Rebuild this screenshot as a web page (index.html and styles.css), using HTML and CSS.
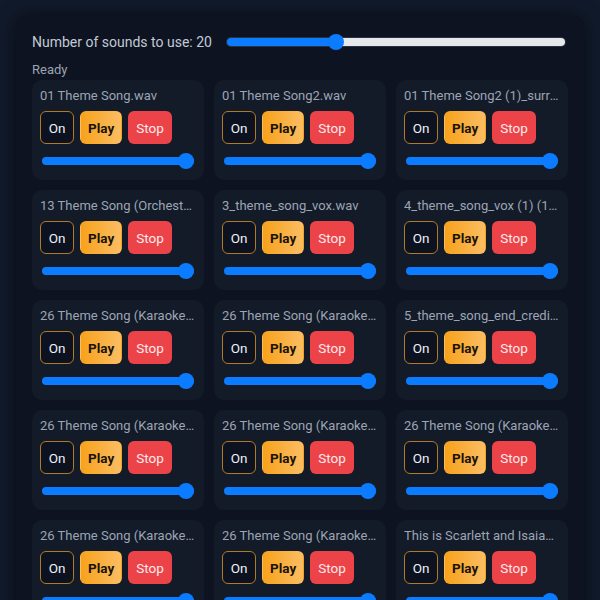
FILE: index.html
```html
<!DOCTYPE html>
<html lang="en">
<head>
<meta charset="UTF-8" />
<title>Sound Board</title>
<meta name="viewport" content="width=device-width, initial-scale=1.0" />
<link rel="stylesheet" href="styles.css">
</head>
<body>
    <main class="panel">
        <div class="controls">
            <label for="range-count">Number of sounds to use: <span id="output-count">20</span></label>
            <input type="range" id="range-count" class="range range-count" value="20" min="0" max="64" step="1" style="--fill:31.25%" />
        </div>

        <div class="status">Ready</div>

        <div class="sounds">
            <div class="sound">
                <div class="sound-name">01 Theme Song.wav</div>
                <div class="sound-buttons"><button class="btn btn-on">On</button><button class="btn btn-play">Play</button><button class="btn btn-stop">Stop</button></div>
                <input type="range" class="range range-volume" value="1" min="0" max="1" step="0.01" />
            </div>
            <div class="sound">
                <div class="sound-name">01 Theme Song2.wav</div>
                <div class="sound-buttons"><button class="btn btn-on">On</button><button class="btn btn-play">Play</button><button class="btn btn-stop">Stop</button></div>
                <input type="range" class="range range-volume" value="1" min="0" max="1" step="0.01" />
            </div>
            <div class="sound">
                <div class="sound-name">01 Theme Song2 (1)_surround.wav</div>
                <div class="sound-buttons"><button class="btn btn-on">On</button><button class="btn btn-play">Play</button><button class="btn btn-stop">Stop</button></div>
                <input type="range" class="range range-volume" value="1" min="0" max="1" step="0.01" />
            </div>

            <div class="sound">
                <div class="sound-name">13 Theme Song (Orchestral).wav</div>
                <div class="sound-buttons"><button class="btn btn-on">On</button><button class="btn btn-play">Play</button><button class="btn btn-stop">Stop</button></div>
                <input type="range" class="range range-volume" value="1" min="0" max="1" step="0.01" />
            </div>
            <div class="sound">
                <div class="sound-name">3_theme_song_vox.wav</div>
                <div class="sound-buttons"><button class="btn btn-on">On</button><button class="btn btn-play">Play</button><button class="btn btn-stop">Stop</button></div>
                <input type="range" class="range range-volume" value="1" min="0" max="1" step="0.01" />
            </div>
            <div class="sound">
                <div class="sound-name">4_theme_song_vox (1) (1).wav</div>
                <div class="sound-buttons"><button class="btn btn-on">On</button><button class="btn btn-play">Play</button><button class="btn btn-stop">Stop</button></div>
                <input type="range" class="range range-volume" value="1" min="0" max="1" step="0.01" />
            </div>

            <div class="sound">
                <div class="sound-name">26 Theme Song (Karaoke).wav</div>
                <div class="sound-buttons"><button class="btn btn-on">On</button><button class="btn btn-play">Play</button><button class="btn btn-stop">Stop</button></div>
                <input type="range" class="range range-volume" value="1" min="0" max="1" step="0.01" />
            </div>
            <div class="sound">
                <div class="sound-name">26 Theme Song (Karaoke) (1).wav</div>
                <div class="sound-buttons"><button class="btn btn-on">On</button><button class="btn btn-play">Play</button><button class="btn btn-stop">Stop</button></div>
                <input type="range" class="range range-volume" value="1" min="0" max="1" step="0.01" />
            </div>
            <div class="sound">
                <div class="sound-name">5_theme_song_end_credits.wav</div>
                <div class="sound-buttons"><button class="btn btn-on">On</button><button class="btn btn-play">Play</button><button class="btn btn-stop">Stop</button></div>
                <input type="range" class="range range-volume" value="1" min="0" max="1" step="0.01" />
            </div>

            <div class="sound">
                <div class="sound-name">26 Theme Song (Karaoke) (2).wav</div>
                <div class="sound-buttons"><button class="btn btn-on">On</button><button class="btn btn-play">Play</button><button class="btn btn-stop">Stop</button></div>
                <input type="range" class="range range-volume" value="1" min="0" max="1" step="0.01" />
            </div>
            <div class="sound">
                <div class="sound-name">26 Theme Song (Karaoke) (3).wav</div>
                <div class="sound-buttons"><button class="btn btn-on">On</button><button class="btn btn-play">Play</button><button class="btn btn-stop">Stop</button></div>
                <input type="range" class="range range-volume" value="1" min="0" max="1" step="0.01" />
            </div>
            <div class="sound">
                <div class="sound-name">26 Theme Song (Karaoke) (4).wav</div>
                <div class="sound-buttons"><button class="btn btn-on">On</button><button class="btn btn-play">Play</button><button class="btn btn-stop">Stop</button></div>
                <input type="range" class="range range-volume" value="1" min="0" max="1" step="0.01" />
            </div>

            <div class="sound">
                <div class="sound-name">26 Theme Song (Karaoke) (5).wav</div>
                <div class="sound-buttons"><button class="btn btn-on">On</button><button class="btn btn-play">Play</button><button class="btn btn-stop">Stop</button></div>
                <input type="range" class="range range-volume" value="1" min="0" max="1" step="0.01" />
            </div>
            <div class="sound">
                <div class="sound-name">26 Theme Song (Karaoke) (6).wav</div>
                <div class="sound-buttons"><button class="btn btn-on">On</button><button class="btn btn-play">Play</button><button class="btn btn-stop">Stop</button></div>
                <input type="range" class="range range-volume" value="1" min="0" max="1" step="0.01" />
            </div>
            <div class="sound">
                <div class="sound-name">This is Scarlett and Isaiah.wav</div>
                <div class="sound-buttons"><button class="btn btn-on">On</button><button class="btn btn-play">Play</button><button class="btn btn-stop">Stop</button></div>
                <input type="range" class="range range-volume" value="1" min="0" max="1" step="0.01" />
            </div>
        </div>
    </main>
</body>
</html>
```

FILE: styles.css
```css
* {
    margin:0px;
    padding:0px;
    box-sizing:border-box;
}

body {
    font-family:Roboto, 'Liberation Sans', Arial, sans-serif;
    font-size:13px;
    color:#c3cad6;
    background-color:#111a2b;
}

.panel {
    margin:16px 16px 0px;
    padding:16px;
    border-radius:12px;
    background-color:#0d1320;
    box-shadow:0px 0px 18px rgba(0, 0, 0, 0.55);
}

.controls {
    display:flex;
    align-items:center;
    gap:15px;
    height:20px;
    font-size:14px;
    color:#c3cad6;
}

.status {
    margin-top:10px;
    margin-bottom:2px;
    line-height:16px;
    color:#9aa4b3;
}

.sounds {
    display:grid;
    grid-template-columns:repeat(3, minmax(0, 1fr));
    gap:10px;
}

.sound {
    min-width:0;
    padding:8px 8px 11px;
    border-radius:10px;
    background-color:#131a28;
}

.sound-name {
    line-height:16px;
    color:#9ca5b4;
    white-space:nowrap;
    overflow:hidden;
    text-overflow:ellipsis;
}

.sound-buttons {
    display:flex;
    gap:6px;
    margin-top:7px;
}

.btn {
    height:33px;
    padding:0px 7px;
    border:1px solid transparent;
    border-radius:6px;
    font-family:inherit;
    font-size:13.5px;
    cursor:pointer;
}

.btn-on {
    min-width:34px;
    border-color:#b07a26;
    color:#eef1f6;
    background-color:#0c1220;
}

.btn-play {
    font-weight:bold;
    color:#1a1308;
    background:linear-gradient(90deg, #f7a21b, #fbbd63);
}

.btn-stop {
    color:#fdeaea;
    background-color:#ec4349;
}

/* range inputs: blue fill up to the value, light track after it */
.range {
    -webkit-appearance:none;
            appearance:none;
    display:block;
    height:16px;
    background:transparent;
    cursor:pointer;
}

.range::-webkit-slider-runnable-track {
    height:8px;
    border-radius:4px;
    background:linear-gradient(90deg, #0b7bff var(--fill, 100%), #e6e8ec var(--fill, 100%));
}

.range::-webkit-slider-thumb {
    -webkit-appearance:none;
    margin-top:-4px;
    width:16px;
    height:16px;
    border-radius:50%;
    background-color:#0b7bff;
}

.range-count {
    flex:1;
    margin-right:3px;
}

.range-count::-webkit-slider-runnable-track {
    box-shadow:0px 0px 0px 1px #2a3140;
}

.range-volume {
    width:152px;
    margin:9px 0px 0px 2px;
}
```
